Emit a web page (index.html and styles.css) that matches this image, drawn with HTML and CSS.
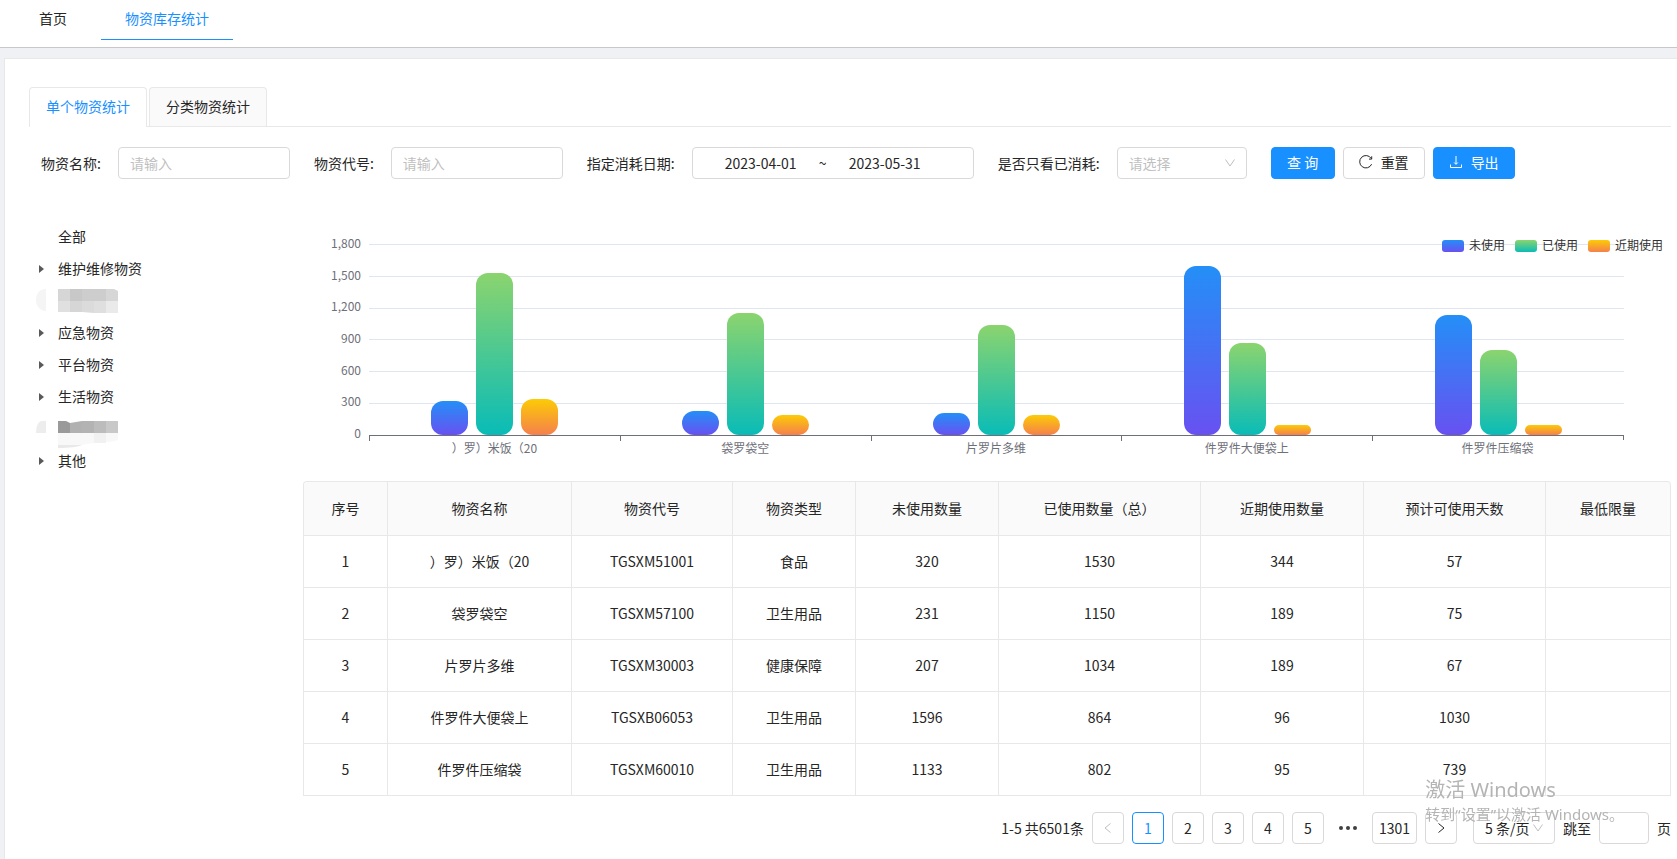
FILE: index.html
```
<!DOCTYPE html>
<html lang="zh-CN">
<head>
<meta charset="utf-8">
<title>物资库存统计</title>
<link rel="stylesheet" href="styles.css">
</head>
<body>
<header class="topbar">
  <nav class="topnav">
    <a class="topnav-item" href="#">首页</a>
    <a class="topnav-item is-active" href="#">物资库存统计</a>
  </nav>
</header>

<main class="card">
  <div class="tabs" role="tablist">
    <button class="tab is-active" type="button" role="tab" aria-selected="true">单个物资统计</button>
    <button class="tab" type="button" role="tab" aria-selected="false">分类物资统计</button>
  </div>

  <form class="filters">
    <div class="field">
      <label for="name">物资名称:</label>
      <input class="control text-input" id="name" type="text" placeholder="请输入">
    </div>
    <div class="field">
      <label for="code">物资代号:</label>
      <input class="control text-input" id="code" type="text" placeholder="请输入">
    </div>
    <div class="field">
      <label for="start">指定消耗日期:</label>
      <div class="control range">
        <input class="range-input" id="start" type="text" value="2023-04-01">
        <span class="range-sep">~</span>
        <input class="range-input" type="text" value="2023-05-31" aria-label="结束日期">
      </div>
    </div>
    <div class="field">
      <label for="used">是否只看已消耗:</label>
      <div class="select-wrap">
        <select class="control select is-empty" id="used"><option>请选择</option></select>
        <svg class="select-arrow" viewBox="0 0 12 12"><path d="M1.500 2.500 6 9l4.500-6.500"/></svg>
      </div>
    </div>
    <div class="actions">
      <button class="btn btn-primary" type="button">查 询</button>
      <button class="btn" type="button">
        <svg class="btn-icon" viewBox="0 0 14 14"><path d="M12.600 9.200A6.200 6.200 0 1 1 12.200 3.500M12.700 1.300v2.800H10"/></svg>
        <span>重置</span>
      </button>
      <button class="btn btn-primary" type="button">
        <svg class="btn-icon" viewBox="0 0 14 14"><path d="M7 1v8M5.200 7.500 7 9.400 8.800 7.500M1.500 9.500v3h11v-3"/></svg>
        <span>导出</span>
      </button>
    </div>
  </form>

  <div class="content">
    <aside class="side">
      <ul class="tree">
        <li class="node"><span class="caret-space"></span>全部</li>
        <li class="node"><span class="caret"></span>维护维修物资</li>
        <li class="node">
          <svg class="mosaic" viewBox="0 0 82 32">
            <path fill="#f5f5f5" d="M10 5C3 5 0 10 0 16s4 11 10 11z"/>
            <path fill="#d6d6d6" d="M22 5h12v12H22z"/><path fill="#c8c8c8" d="M34 5h12v12H34z"/>
            <path fill="#cdcdcd" d="M46 5h24v12H46z"/><path fill="#d6d6d6" d="M70 5h8l4 2v10H70z"/>
            <path fill="#e0e0e0" d="M22 17h12v11H22z"/><path fill="#d6d6d6" d="M34 17h12v11H34z"/>
            <path fill="#dbdbdb" d="M46 17h12v12l-12-1z"/><path fill="#dfdfdf" d="M58 17h12v12H58z"/>
            <path fill="#eaeaea" d="M70 17h12v12H70z"/>
          </svg>
        </li>
        <li class="node"><span class="caret"></span>应急物资</li>
        <li class="node"><span class="caret"></span>平台物资</li>
        <li class="node"><span class="caret"></span>生活物资</li>
        <li class="node">
          <svg class="mosaic" viewBox="0 0 82 32">
            <path fill="#ededed" d="M10 9H6c-4 0-6 6-6 12h10z"/>
            <path fill="#9a9a9a" d="M22 9h8l4 2v10H22z"/><path fill="#b1b1b1" d="M34 11l12-2v12H34z"/>
            <path fill="#b3b3b3" d="M46 9h12v12H46z"/><path fill="#bcbcbc" d="M58 9h12v12H58z"/>
            <path fill="#c8c8c8" d="M70 9h12v12H70z"/>
            <path fill="#f8f8f8" d="M22 21h60v7c-8 3-26 2-36 5l-24 0z"/>
            <path fill="#f1f1f1" d="M58 21h12v10H58z"/>
            <path fill="#e9e9e9" d="M22 33h24c-4 2-12 3-24 3z"/>
          </svg>
        </li>
        <li class="node"><span class="caret"></span>其他</li>
      </ul>
    </aside>

    <section class="report">
      <div class="chart">
        <div class="y-axis">
          <span>1,800</span><span>1,500</span><span>1,200</span><span>900</span><span>600</span><span>300</span><span>0</span>
        </div>
        <div class="plot-area">
          <div class="plot">
            <div class="group"><i class="bar unused" style="height:17.8%"></i><i class="bar used" style="height:85%"></i><i class="bar recent" style="height:19.1%"></i></div>
            <div class="group"><i class="bar unused" style="height:12.8%"></i><i class="bar used" style="height:63.9%"></i><i class="bar recent" style="height:10.5%"></i></div>
            <div class="group"><i class="bar unused" style="height:11.5%"></i><i class="bar used" style="height:57.4%"></i><i class="bar recent" style="height:10.5%"></i></div>
            <div class="group"><i class="bar unused" style="height:88.7%"></i><i class="bar used" style="height:48%"></i><i class="bar recent" style="height:5.3%"></i></div>
            <div class="group"><i class="bar unused" style="height:62.9%"></i><i class="bar used" style="height:44.6%"></i><i class="bar recent" style="height:5.3%"></i></div>
          </div>
          <div class="x-axis">
            <span>）罗）米饭（20</span><span>袋罗袋空</span><span>片罗片多维</span><span>件罗件大便袋上</span><span>件罗件压缩袋</span>
          </div>
        </div>
        <div class="legend">
          <span class="legend-item"><i class="swatch unused"></i>未使用</span>
          <span class="legend-item"><i class="swatch used"></i>已使用</span>
          <span class="legend-item"><i class="swatch recent"></i>近期使用</span>
        </div>
      </div>

      <table class="table">
        <colgroup>
          <col class="c-index"><col class="c-name"><col class="c-code"><col class="c-type"><col class="c-unused"><col class="c-used"><col class="c-recent"><col class="c-days"><col class="c-min">
        </colgroup>
        <thead>
          <tr><th>序号</th><th>物资名称</th><th>物资代号</th><th>物资类型</th><th>未使用数量</th><th>已使用数量（总）</th><th>近期使用数量</th><th>预计可使用天数</th><th>最低限量</th></tr>
        </thead>
        <tbody>
          <tr><td>1</td><td>）罗）米饭（20</td><td>TGSXM51001</td><td>食品</td><td>320</td><td>1530</td><td>344</td><td>57</td><td></td></tr>
          <tr><td>2</td><td>袋罗袋空</td><td>TGSXM57100</td><td>卫生用品</td><td>231</td><td>1150</td><td>189</td><td>75</td><td></td></tr>
          <tr><td>3</td><td>片罗片多维</td><td>TGSXM30003</td><td>健康保障</td><td>207</td><td>1034</td><td>189</td><td>67</td><td></td></tr>
          <tr><td>4</td><td>件罗件大便袋上</td><td>TGSXB06053</td><td>卫生用品</td><td>1596</td><td>864</td><td>96</td><td>1030</td><td></td></tr>
          <tr><td>5</td><td>件罗件压缩袋</td><td>TGSXM60010</td><td>卫生用品</td><td>1133</td><td>802</td><td>95</td><td>739</td><td></td></tr>
        </tbody>
      </table>

      <nav class="pagination" aria-label="分页">
        <span class="total">1-5 共6501条</span>
        <button class="page is-disabled" type="button" aria-label="上一页"><svg class="page-icon" viewBox="0 0 12 12"><path d="M8.500 1.500 3 6l5.500 4.500"/></svg></button>
        <button class="page is-current" type="button">1</button>
        <button class="page" type="button">2</button>
        <button class="page" type="button">3</button>
        <button class="page" type="button">4</button>
        <button class="page" type="button">5</button>
        <span class="dots"><i></i><i></i><i></i></span>
        <button class="page" type="button">1301</button>
        <button class="page" type="button" aria-label="下一页"><svg class="page-icon" viewBox="0 0 12 12"><path d="M3.500 1.500 9 6l-5.500 4.500"/></svg></button>
        <div class="select-wrap size-wrap">
          <select class="control select size-select" aria-label="每页条数"><option>5 条/页</option></select>
          <svg class="select-arrow" viewBox="0 0 12 12"><path d="M1.500 2.500 6 9l4.500-6.500"/></svg>
        </div>
        <label for="jump">跳至</label>
        <input class="control jump" id="jump" type="text">
        <span>页</span>
      </nav>
    </section>
  </div>
</main>

<div class="watermark">
  <p class="watermark-title">激活 Windows</p>
  <p class="watermark-text">转到“设置”以激活 Windows。</p>
</div>
</body>
</html>
```
FILE: styles.css
```
* { box-sizing: border-box; }

body {
  margin: 0;
  min-height: 100vh;
  display: flex;
  flex-direction: column;
  background: #f0f1f5;
  color: #262626;
  font: 14px/22px "Noto Sans CJK SC", sans-serif;
}

button, input, select { font: inherit; color: inherit; margin: 0; }
p, ul { margin: 0; padding: 0; }
svg { display: block; fill: none; stroke: currentColor; }

/* Top navigation */
.topbar { background: #fff; border-bottom: 1px solid #c8c8c8; padding: 0 16px 7px; }
.topnav { display: flex; gap: 11px; }
.topnav-item {
  padding: 7px 23px 10px;
  border-bottom: 1px solid transparent;
  color: #262626;
  text-decoration: none;
}
.topnav-item.is-active { padding: 7px 24px 10px; border-color: #1890ff; color: #1890ff; }

.card {
  flex: 1;
  margin: 10px 0 0 4px;
  padding: 28px 6px 8px 24px;
  background: #fff;
  border: 1px solid #e8e8e8;
  border-width: 1px 0 0 1px;
}

/* Card tabs */
.tabs { display: flex; gap: 2px; border-bottom: 1px solid #e8e8e8; }
.tab {
  height: 39px;
  padding: 0 16px 2px;
  background: #fafafa;
  border: 1px solid #e8e8e8;
  border-bottom: 0;
  border-radius: 4px 4px 0 0;
}
.tab.is-active { height: 40px; margin-bottom: -1px; padding-bottom: 4px; background: #fff; color: #1890ff; }

/* Filter row */
.filters { display: flex; align-items: center; gap: 24px; padding: 20px 12px 0; }
.field { display: flex; align-items: center; gap: 17px; white-space: nowrap; }
.control {
  height: 32px;
  background: #fff;
  border: 1px solid #d9d9d9;
  border-radius: 4px;
  outline: 0;
}
.text-input { width: 172px; padding: 0 11px; }
.text-input::placeholder { color: #bfbfbf; opacity: 1; }
.range { display: flex; align-items: center; width: 282px; padding: 0 32px; }
.range-input { width: 72px; padding: 0; border: 0; outline: 0; text-align: center; }
.range-sep { width: 52px; text-align: center; }
.select-wrap { position: relative; color: #bfbfbf; }
.select { width: 130px; padding: 0 11px; appearance: none; color: #262626; }
.select.is-empty { color: #bfbfbf; }
.select-arrow { position: absolute; top: 10px; right: 11px; width: 12px; height: 12px; pointer-events: none; }
.actions { display: flex; gap: 8px; }
.btn {
  display: flex;
  align-items: center;
  justify-content: center;
  gap: 8px;
  min-width: 64px;
  height: 32px;
  padding: 0 15px 2px;
  background: #fff;
  border: 1px solid #d9d9d9;
  border-radius: 4px;
  white-space: nowrap;
}
.btn-primary { background: #1890ff; border-color: #1890ff; color: #fff; }
.btn-icon { width: 14px; height: 14px; }

/* Body columns */
.content { display: flex; margin-top: 41px; }
.side { width: 274px; flex: none; }
.report { flex: 1; min-width: 0; }

/* Category tree */
.tree { list-style: none; padding-left: 7px; }
.node { display: flex; align-items: center; height: 32px; }
.caret { width: 5px; margin: 2px 14px 0 3px; border: 4px solid transparent; border-right: 0; border-left: 5px solid #595959; }
.caret-space { width: 22px; }
.mosaic { width: 82px; height: 32px; overflow: visible; stroke: none; }

/* Bar chart */
.chart { position: relative; display: flex; padding: 24px 47px 0 26px; color: #6e7079; font-size: 12px; line-height: 18px; }
.y-axis {
  display: flex;
  flex-direction: column;
  justify-content: space-between;
  width: 32px;
  height: 208px;
  margin: -10px 8px 0 0;
  text-align: right;
}
.plot-area { flex: 1; }
.plot {
  display: flex;
  height: 192px;
  border-bottom: 1px solid #6e7079;
  background: repeating-linear-gradient(#e0e6f1 0 1px, transparent 1px calc(100% / 6));
}
.group { flex: 1; display: flex; justify-content: center; align-items: flex-end; gap: 3%; }
.bar { width: 15%; border-radius: 12px; }
.unused { background: linear-gradient(#248ff7, #6851f1); }
.used { background: linear-gradient(#8bd46e, #09bcb7); }
.recent { background: linear-gradient(#fccb05, #f5804d); }
.x-axis { display: flex; border-right: 1px solid #6e7079; border-image: linear-gradient(#6e7079 5px, transparent 5px) 1; }
.x-axis span {
  flex: 1;
  padding-top: 3px;
  text-align: center;
  background: linear-gradient(#6e7079, #6e7079) 0 0 / 1px 5px no-repeat;
}
.legend { position: absolute; top: 16px; right: 8px; display: flex; gap: 10px; color: #333; }
.legend-item { display: flex; align-items: center; gap: 5px; }
.swatch { width: 22px; height: 12px; margin-top: 2px; border-radius: 3px; }

/* Data table */
.table {
  width: 100%;
  margin-top: 24px;
  table-layout: fixed;
  border-collapse: separate;
  border-spacing: 0;
  border: 1px solid #e8e8e8;
  border-width: 1px 0 0 1px;
  border-radius: 4px 4px 0 0;
}
.table th, .table td {
  height: 52px;
  padding: 0 8px 1px;
  border: 1px solid #e8e8e8;
  border-width: 0 1px 1px 0;
  font-weight: 400;
  text-align: center;
}
.table th { height: 54px; background: #fafafa; }
.table th:first-child { border-top-left-radius: 4px; }
.table th:last-child { border-top-right-radius: 4px; }
.c-index { width: 84px; }
.c-name { width: 184px; }
.c-code { width: 161px; }
.c-type { width: 123px; }
.c-unused { width: 143px; }
.c-used { width: 202px; }
.c-recent { width: 163px; }
.c-days { width: 182px; }

/* Pagination */
.pagination { display: flex; justify-content: flex-end; align-items: center; gap: 8px; margin-top: 16px; white-space: nowrap; }
.page {
  display: grid;
  place-items: center;
  min-width: 32px;
  height: 32px;
  padding: 0 6px;
  background: #fff;
  border: 1px solid #d9d9d9;
  border-radius: 4px;
}
.page.is-current { border-color: #1890ff; color: #1890ff; }
.page.is-disabled { color: #bfbfbf; }
.page-icon { width: 12px; height: 12px; }
.dots { display: flex; justify-content: center; gap: 3px; width: 32px; }
.dots i { width: 4px; height: 4px; border-radius: 50%; background: #404040; }
.size-wrap { margin-left: 8px; }
.size-select { width: 82px; }
.jump { width: 50px; }

/* System activation notice */
.watermark {
  position: fixed;
  right: 53px;
  bottom: 34px;
  color: #b4b4b4;
  font-family: "Noto Sans", "Noto Sans CJK SC", sans-serif;
  pointer-events: none;
}
.watermark-title { font-size: 20px; line-height: 26px; }
.watermark-text { font-size: 15px; line-height: 22px; }
```
